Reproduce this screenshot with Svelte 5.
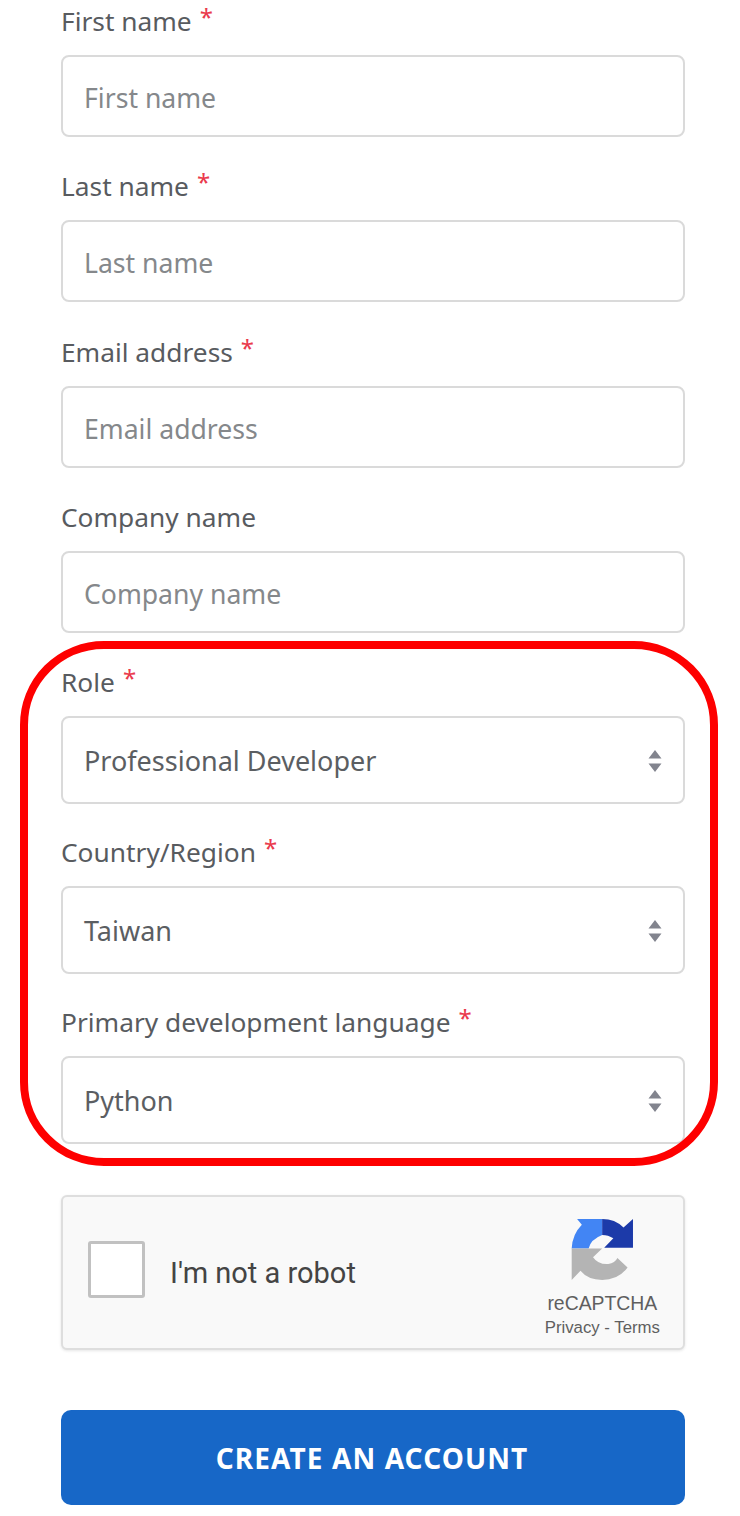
<script>
  const topFields = [
    { label: "First name", required: true },
    { label: "Last name", required: true },
    { label: "Email address", required: true },
    { label: "Company name", required: false },
  ];
  const selects = [
    { label: "Role", value: "Professional Developer" },
    { label: "Country/Region", value: "Taiwan" },
    { label: "Primary development language", value: "Python" },
  ];
</script>

<form class="signup">
  {#each topFields as f}
    <div class="field">
      <span class="label">{f.label}{#if f.required}<span class="req">*</span>{/if}</span>
      <div class="input">{f.label}</div>
    </div>
  {/each}

  <div class="select-group">
    <div class="ring"></div>
    {#each selects as s}
      <div class="field sel">
        <span class="label">{s.label}<span class="req">*</span></span>
        <div class="select">
          <span>{s.value}</span>
          <svg class="arrows" viewBox="0 0 14 24" width="14" height="24" aria-hidden="true">
            <path d="M7 1 L13.5 9.5 H0.5 Z M0.5 14.5 H13.5 L7 23 Z" fill="#82848e" />
          </svg>
        </div>
      </div>
    {/each}
  </div>

  <div class="captcha">
    <div class="check"></div>
    <span class="robot">I'm not a robot</span>
    <div class="brand">
      <svg viewBox="20 22 186 186" width="63" height="63" aria-hidden="true">
        <path d="M112 25 L38 25 L52 42 Q24 70 22 112 L72 112 Q78 85 112 72 Z" fill="#4285f4" />
        <path d="M112 25 Q150 25 175 50 L203 25 L203 110 L118 110 L145 82 Q130 72 112 72 Z" fill="#1c3aa9" />
        <path d="M22 112 L112 112 L85 138 Q100 160 130 158 Q150 155 157 140 L187 168 Q160 205 112 205 Q70 205 48 178 L22 205 Z" fill="#b4b4b4" />
      </svg>
      <span class="rc">reCAPTCHA</span>
      <span class="terms">Privacy - Terms</span>
    </div>
  </div>

  <button type="button" class="submit">CREATE AN ACCOUNT</button>
</form>

<style>
  :global(body) {
    margin: 0;
    background: #fff;
  }

  .signup {
    box-sizing: border-box;
    width: 740px;
    height: 1516px;
    padding: 0 55px 0 61px;
    font-family: "Noto Sans", "Open Sans", sans-serif;
    overflow: hidden;
  }

  .field {
    height: 165.3px;
    display: flex;
    flex-direction: column;
    padding-top: 4px;
    box-sizing: border-box;
  }

  .label {
    display: block;
    height: 51px;
    font-size: 26.3px;
    line-height: 35px;
    color: #585b5f;
  }

  .req {
    display: inline-block;
    color: #ea3a4c;
    margin-left: 8px;
    font-size: 24px;
    line-height: 20px;
    vertical-align: 5px;
  }

  .input {
    box-sizing: border-box;
    height: 82px;
    padding: 4px 21px 0;
    display: flex;
    align-items: center;
    border: 2px solid #dadada;
    border-radius: 8px;
    font-size: 26.6px;
    color: #85888b;
  }

  .select-group {
    position: relative;
  }

  .ring {
    position: absolute;
    left: -41px;
    top: -20px;
    width: 698px;
    height: 525px;
    box-sizing: border-box;
    border: 8px solid #fe0000;
    border-radius: 84px;
    pointer-events: none;
  }

  .field.sel {
    height: 170px;
  }

  .select {
    box-sizing: border-box;
    height: 87.5px;
    padding: 2px 22px 0 21px;
    display: flex;
    align-items: center;
    justify-content: space-between;
    border: 2px solid #dadada;
    border-radius: 8px;
    font-size: 27px;
    color: #5b5e62;
  }

  .arrows {
    margin-right: -1px;
  }

  .captcha {
    box-sizing: border-box;
    height: 155px;
    margin-top: 24px;
    display: flex;
    align-items: center;
    padding: 0 23px 0 25px;
    background: #f9f9f9;
    border: 2px solid #dedede;
    border-radius: 6px;
    box-shadow: 0 1px 3px rgba(0, 0, 0, 0.1);
  }

  .check {
    box-sizing: border-box;
    width: 57px;
    height: 57px;
    margin-bottom: 6px;
    background: #fff;
    border: 3px solid #c1c1c1;
    border-radius: 3px;
  }

  .robot {
    margin-left: 25px;
    font-family: Roboto, sans-serif;
    font-size: 29px;
    color: #444;
  }

  .brand {
    margin-left: auto;
    padding-top: 12px;
    display: flex;
    flex-direction: column;
    align-items: center;
    font-family: "Liberation Sans", sans-serif;
    color: #5f5f5f;
  }

  .rc {
    margin-top: 9px;
    font-size: 19.4px;
    line-height: 26px;
  }

  .terms {
    font-size: 16.8px;
    line-height: 24px;
  }

  .submit {
    display: block;
    width: 100%;
    height: 95px;
    margin-top: 60px;
    padding: 0 2px 0 0;
    border: none;
    border-radius: 10px;
    background: #1767c7;
    color: #fff;
    font-family: "Noto Sans", sans-serif;
    font-size: 28px;
    font-weight: 700;
    letter-spacing: 1.1px;
  }
</style>
